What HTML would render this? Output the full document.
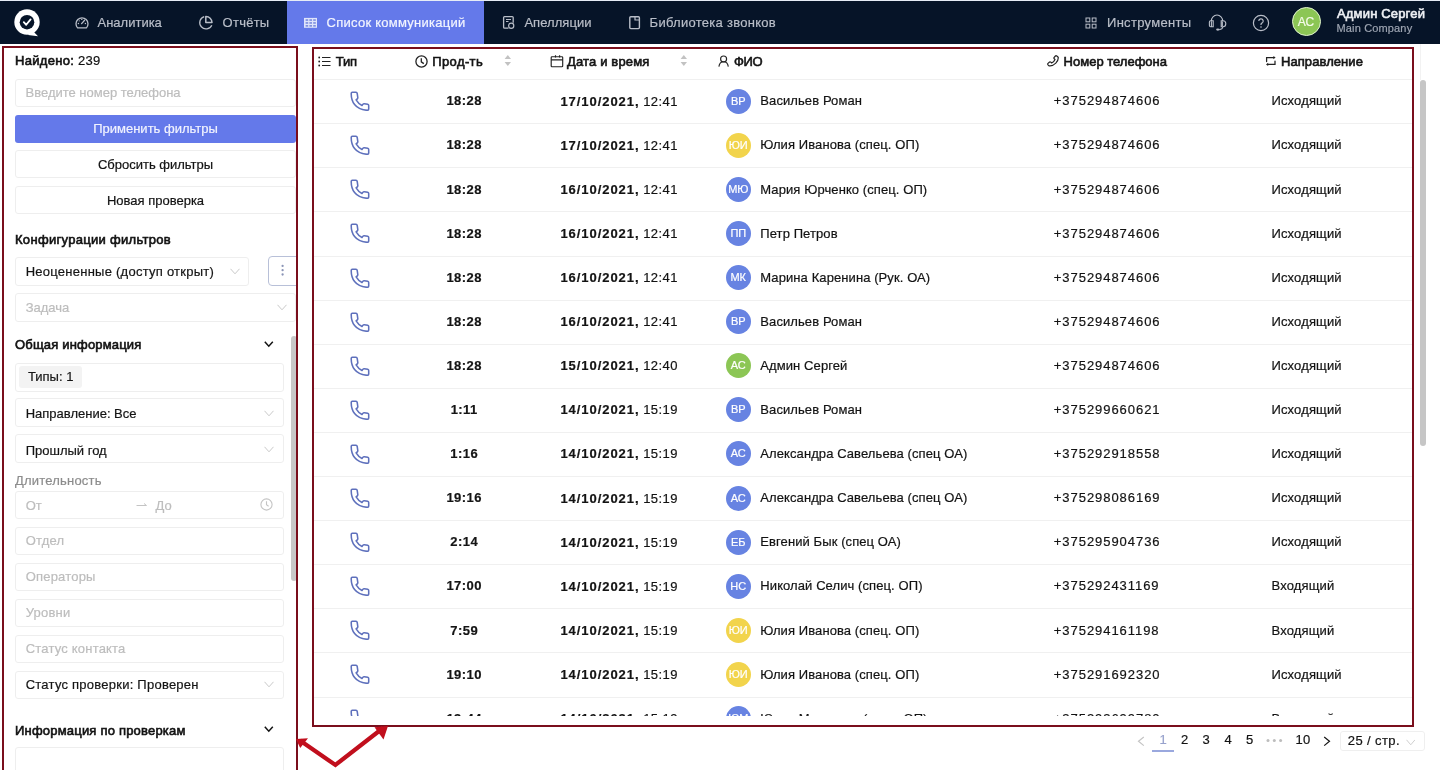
<!DOCTYPE html>
<html><head><meta charset="utf-8"><style>
html,body{margin:0;padding:0;background:#fff;}
body{width:1440px;height:770px;overflow:hidden;position:relative;font-family:"Liberation Sans", sans-serif;}
.t{position:absolute;white-space:nowrap;line-height:1;-webkit-text-stroke:0.2px currentColor;}
#root{position:absolute;left:0;top:0;width:1440px;height:770px;will-change:transform;}
svg{display:block;}
</style></head><body>
<div id="root"><div style="position:absolute;left:0px;top:0px;width:1440px;height:1px;background:#e6ecf6"></div><div style="position:absolute;left:0px;top:1px;width:1440px;height:43px;background:#061428"></div><div style="position:absolute;left:286.6px;top:1px;width:197.8px;height:43px;background:#6479ea"></div><svg style="position:absolute;left:13px;top:8px;" width="28" height="29" viewBox="0 0 28 29"><circle cx="14" cy="14" r="12.7" fill="#fff"/><path d="M19 22 L25 28.2 L15 27 Z" fill="#fff"/><circle cx="14" cy="14.2" r="7.3" fill="#061428"/><path d="M10.8 14.2 L13.2 16.8 L17.6 11.4" fill="none" stroke="#fff" stroke-width="1.8" stroke-linecap="round" stroke-linejoin="round"/></svg><svg style="position:absolute;left:74px;top:15px;" width="16" height="16" viewBox="0 0 16 16"><path d="M3.6 12.9 A6 6 0 1 1 12.4 12.9 Z" fill="none" stroke="#b9bec8" stroke-width="1.3" stroke-linejoin="round"/><path d="M7.6 8.6 L10.6 5.3" stroke="#b9bec8" stroke-width="1.3" stroke-linecap="round"/><circle cx="7.8" cy="4.4" r="0.7" fill="#b9bec8"/><circle cx="4.4" cy="8.5" r="0.7" fill="#b9bec8"/><circle cx="11.4" cy="8.5" r="0.7" fill="#b9bec8"/><circle cx="5.2" cy="5.8" r="0.6" fill="#b9bec8"/></svg><div class="t" style="left:97.5px;top:16.20px;font-size:13px;font-weight:400;color:#b9bec8;letter-spacing:0px;">Аналитика</div><svg style="position:absolute;left:197px;top:14px;" width="17" height="17" viewBox="0 0 17 17"><path d="M7.2 2.6 A6.3 6.3 0 1 0 14.8 11.2" fill="none" stroke="#b9bec8" stroke-width="1.3"/><path d="M8.8 2.6 A6 6 0 0 1 15 8.6 H8.8 Z" fill="none" stroke="#b9bec8" stroke-width="1.5" stroke-linejoin="round"/></svg><div class="t" style="left:222.6px;top:16.20px;font-size:13px;font-weight:400;color:#b9bec8;letter-spacing:0.25px;">Отчёты</div><svg style="position:absolute;left:303px;top:17px;" width="15" height="12" viewBox="0 0 15 12"><rect x="1" y="0.9" width="13" height="9.9" fill="#dfe4fb"/><g fill="#8091e0"><rect x="2.6" y="2.2" width="2.6" height="1.7"/><rect x="6.4" y="2.2" width="2.6" height="1.7"/><rect x="10.2" y="2.2" width="2.6" height="1.7"/><rect x="2.6" y="5.1" width="2.6" height="1.7"/><rect x="6.4" y="5.1" width="2.6" height="1.7"/><rect x="10.2" y="5.1" width="2.6" height="1.7"/><rect x="2.6" y="8" width="2.6" height="1.7"/><rect x="6.4" y="8" width="2.6" height="1.7"/><rect x="10.2" y="8" width="2.6" height="1.7"/></g></svg><div class="t" style="left:326.6px;top:16.20px;font-size:13px;font-weight:400;color:#f3f5ff;letter-spacing:0.25px;">Список коммуникаций</div><svg style="position:absolute;left:502px;top:15px;" width="14" height="15" viewBox="0 0 14 15"><path d="M6.5 13.2 H2.6 Q1.6 13.2 1.6 12.2 V2.6 Q1.6 1.6 2.6 1.6 H10.2 Q11.2 1.6 11.2 2.6 V7.8" fill="none" stroke="#b9bec8" stroke-width="1.3"/><path d="M4 4.5 H9 M4 6.5 H6.5" stroke="#b9bec8" stroke-width="1.1"/><circle cx="9.2" cy="10.7" r="2.6" fill="none" stroke="#b9bec8" stroke-width="1.2"/></svg><div class="t" style="left:524.4px;top:16.20px;font-size:13px;font-weight:400;color:#b9bec8;letter-spacing:0.05px;">Апелляции</div><svg style="position:absolute;left:628px;top:15px;" width="13" height="15" viewBox="0 0 13 15"><rect x="1.8" y="1.8" width="9.6" height="11.8" rx="1" fill="none" stroke="#b9bec8" stroke-width="1.4"/><path d="M7 1.8 V5 H11.4" fill="none" stroke="#b9bec8" stroke-width="1.2"/></svg><div class="t" style="left:649.6px;top:16.20px;font-size:13px;font-weight:400;color:#b9bec8;letter-spacing:0.28px;">Библиотека звонков</div><svg style="position:absolute;left:1085px;top:17px;" width="12" height="12" viewBox="0 0 12 12"><rect x="1" y="1" width="3.8" height="3.8" fill="none" stroke="#b9bec8" stroke-width="1"/><rect x="7.2" y="1" width="3.8" height="3.8" fill="none" stroke="#b9bec8" stroke-width="1"/><rect x="1" y="7.2" width="3.8" height="3.8" fill="none" stroke="#b9bec8" stroke-width="1"/><rect x="7.2" y="7.2" width="3.8" height="3.8" fill="none" stroke="#b9bec8" stroke-width="1"/></svg><div class="t" style="left:1107px;top:16.20px;font-size:13px;font-weight:400;color:#b9bec8;letter-spacing:0.3px;">Инструменты</div><svg style="position:absolute;left:1207px;top:12px;" width="21" height="20" viewBox="0 0 21 20"><path d="M4.3 9.2 A5.7 6.2 0 0 1 15.7 9.2" fill="none" stroke="#b9bec8" stroke-width="1.1"/><path d="M6.2 8.8 H3.6 Q2.4 8.8 2.4 10 V13.6 Q2.4 14.8 3.6 14.8 H6.2 Z M4.4 9.4 V14.2" fill="none" stroke="#b9bec8" stroke-width="1.1"/><path d="M14.2 8.8 H16 Q18.8 8.8 18.8 11.8 Q18.8 14.8 16 14.8 H14.2 Z" fill="none" stroke="#b9bec8" stroke-width="1.1"/><path d="M15.2 9.4 V14.2" stroke="#b9bec8" stroke-width="1.4"/><path d="M15.8 15 Q15.4 17.4 12.2 17.6" fill="none" stroke="#b9bec8" stroke-width="1.1"/><ellipse cx="10.8" cy="17.6" rx="1.7" ry="1.1" fill="#b9bec8"/></svg><svg style="position:absolute;left:1251.5px;top:13.8px;" width="18" height="18" viewBox="0 0 18 18"><circle cx="9" cy="9" r="7.6" fill="none" stroke="#b9bec8" stroke-width="1.2"/><path d="M6.8 7.1 A2.2 2.2 0 1 1 9.9 9.1 Q9 9.6 9 10.6 V11" fill="none" stroke="#b9bec8" stroke-width="1.2"/><circle cx="9" cy="13" r="0.8" fill="#b9bec8"/></svg><div style="position:absolute;left:1291.5px;top:7px;width:29px;height:29px;border-radius:50%;background:#8cc655;box-sizing:border-box;border:1.5px solid #e2f4cf"></div><div class="t" style="left:1106px;width:400px;text-align:center;top:16.14px;font-size:12px;font-weight:400;color:#f4fbe9;letter-spacing:0px;">АС</div><div class="t" style="left:1337px;top:7.30px;font-size:13px;font-weight:400;color:#eef0f4;letter-spacing:0.17px;-webkit-text-stroke:0.6px #eef0f4;">Админ Сергей</div><div class="t" style="left:1336.5px;top:23.49px;font-size:11px;font-weight:400;color:#9ea5b2;letter-spacing:0.15px;">Main Company</div><div style="position:absolute;left:0;top:44px;width:296px;height:726px;overflow:hidden"><div style="position:absolute;left:0;top:-44px;width:1440px;height:770px"><div class="t" style="left:15px;top:54.40px;font-size:13px;font-weight:400;color:#111;letter-spacing:0.3px;"><span style="-webkit-text-stroke:0.6px #111">Найдено:</span> 239</div><div style="position:absolute;left:14.5px;top:78.5px;width:281.5px;height:28px;box-sizing:border-box;border:1px solid #eeeeee;border-radius:3px;background:#fff;"></div><div class="t" style="left:25.5px;top:86.20px;font-size:13px;font-weight:400;color:#bdbdbd;letter-spacing:0px;">Введите номер телефона</div><div style="position:absolute;left:14.5px;top:114.5px;width:281.5px;height:28px;background:#6479ea;border-radius:3px"></div><div class="t" style="left:-44.5px;width:400px;text-align:center;top:122.20px;font-size:13px;font-weight:400;color:#f1f3ff;letter-spacing:0px;">Применить фильтры</div><div style="position:absolute;left:14.5px;top:150.3px;width:281.5px;height:28px;box-sizing:border-box;border:1px solid #eeeeee;border-radius:3px;background:#fff;"></div><div class="t" style="left:-44.5px;width:400px;text-align:center;top:158.30px;font-size:13px;font-weight:400;color:#131313;letter-spacing:0px;">Сбросить фильтры</div><div style="position:absolute;left:14.5px;top:186px;width:281.5px;height:28px;box-sizing:border-box;border:1px solid #eeeeee;border-radius:3px;background:#fff;"></div><div class="t" style="left:-44.5px;width:400px;text-align:center;top:194.20px;font-size:13px;font-weight:400;color:#131313;letter-spacing:0px;">Новая проверка</div><div class="t" style="left:15px;top:232.60px;font-size:13px;font-weight:400;color:#111;letter-spacing:0.3px;-webkit-text-stroke:0.6px #111;">Конфигурации фильтров</div><div style="position:absolute;left:14.5px;top:256.5px;width:234.5px;height:29px;box-sizing:border-box;border:1px solid #eeeeee;border-radius:3px;background:#fff;"></div><div class="t" style="left:25.7px;top:264.70px;font-size:13px;font-weight:400;color:#151515;letter-spacing:0.25px;">Неоцененные (доступ открыт)</div><svg style="position:absolute;left:229.5px;top:268px;" width="10" height="7" viewBox="0 0 10 7"><path d="M0.5 0.8 L5.0 5.8 L9.5 0.8" fill="none" stroke="#c9c9c9" stroke-width="1"/></svg><div style="position:absolute;left:268.3px;top:256.2px;width:40px;height:29.4px;box-sizing:border-box;border:1px solid #b8c0d8;border-radius:4px;background:#fff"></div><svg style="position:absolute;left:280px;top:262px;" width="5" height="14" viewBox="0 0 5 14"><circle cx="2.6" cy="3.9" r="1.15" fill="#8a94b6"/><circle cx="2.6" cy="8.2" r="1.15" fill="#8a94b6"/><circle cx="2.6" cy="12.5" r="1.15" fill="#8a94b6"/></svg><div style="position:absolute;left:14.5px;top:292.6px;width:281.5px;height:29px;box-sizing:border-box;border:1px solid #eeeeee;border-radius:3px;background:#fff;"></div><div class="t" style="left:25.7px;top:301.00px;font-size:13px;font-weight:400;color:#bdbdbd;letter-spacing:0px;">Задача</div><svg style="position:absolute;left:277px;top:304px;" width="10" height="7" viewBox="0 0 10 7"><path d="M0.5 0.8 L5.0 5.8 L9.5 0.8" fill="none" stroke="#c9c9c9" stroke-width="1"/></svg><div class="t" style="left:15px;top:338.30px;font-size:13px;font-weight:400;color:#111;letter-spacing:0.18px;-webkit-text-stroke:0.6px #111;">Общая информация</div><svg style="position:absolute;left:264px;top:341px;" width="10" height="7" viewBox="0 0 10 7"><path d="M0.8 0.8 L4.8 5.2 L8.8 0.8" fill="none" stroke="#131313" stroke-width="1.5"/></svg><div style="position:absolute;left:14.5px;top:362.5px;width:269px;height:29px;box-sizing:border-box;border:1px solid #eeeeee;border-radius:3px;background:#fff;"></div><div style="position:absolute;left:19.3px;top:366.4px;width:62.4px;height:21.5px;background:#f3f3f3;border-radius:3px"></div><div class="t" style="left:27.9px;top:369.70px;font-size:13px;font-weight:400;color:#151515;letter-spacing:0px;">Типы: 1</div><div style="position:absolute;left:14.5px;top:398.3px;width:269px;height:29px;box-sizing:border-box;border:1px solid #eeeeee;border-radius:3px;background:#fff;"></div><div class="t" style="left:25.7px;top:406.50px;font-size:13px;font-weight:400;color:#151515;letter-spacing:0px;">Направление: Все</div><svg style="position:absolute;left:263.5px;top:410px;" width="10" height="7" viewBox="0 0 10 7"><path d="M0.5 0.8 L5.0 5.8 L9.5 0.8" fill="none" stroke="#c9c9c9" stroke-width="1"/></svg><div style="position:absolute;left:14.5px;top:434.3px;width:269px;height:29px;box-sizing:border-box;border:1px solid #eeeeee;border-radius:3px;background:#fff;"></div><div class="t" style="left:25.7px;top:443.50px;font-size:13px;font-weight:400;color:#151515;letter-spacing:0px;">Прошлый год</div><svg style="position:absolute;left:263.5px;top:446px;" width="10" height="7" viewBox="0 0 10 7"><path d="M0.5 0.8 L5.0 5.8 L9.5 0.8" fill="none" stroke="#c9c9c9" stroke-width="1"/></svg><div class="t" style="left:15px;top:473.90px;font-size:13px;font-weight:400;color:#8c8c8c;letter-spacing:0.2px;">Длительность</div><div style="position:absolute;left:14.5px;top:490.5px;width:269px;height:28px;box-sizing:border-box;border:1px solid #eeeeee;border-radius:3px;background:#fff;"></div><div class="t" style="left:25.7px;top:498.50px;font-size:13px;font-weight:400;color:#bdbdbd;letter-spacing:0px;">От</div><svg style="position:absolute;left:136px;top:502px;" width="12" height="6" viewBox="0 0 12 6"><path d="M0.5 3.5 H10.5 L8 1.5" fill="none" stroke="#c4c4c4" stroke-width="1"/></svg><div class="t" style="left:155.5px;top:498.50px;font-size:13px;font-weight:400;color:#bdbdbd;letter-spacing:0px;">До</div><svg style="position:absolute;left:260px;top:498px;" width="13" height="13" viewBox="0 0 13 13"><circle cx="6.5" cy="6.5" r="5.6" fill="none" stroke="#c4c4c4" stroke-width="1.1"/><path d="M6.5 3.3 V6.8 L8.6 8.2" fill="none" stroke="#c4c4c4" stroke-width="1.1"/></svg><div style="position:absolute;left:14.5px;top:526.5px;width:269px;height:28px;box-sizing:border-box;border:1px solid #eeeeee;border-radius:3px;background:#fff;"></div><div class="t" style="left:25.7px;top:534.30px;font-size:13px;font-weight:400;color:#bdbdbd;letter-spacing:0.2px;">Отдел</div><div style="position:absolute;left:14.5px;top:562.5px;width:269px;height:28px;box-sizing:border-box;border:1px solid #eeeeee;border-radius:3px;background:#fff;"></div><div class="t" style="left:25.7px;top:570.30px;font-size:13px;font-weight:400;color:#bdbdbd;letter-spacing:0.2px;">Операторы</div><div style="position:absolute;left:14.5px;top:598.5px;width:269px;height:28px;box-sizing:border-box;border:1px solid #eeeeee;border-radius:3px;background:#fff;"></div><div class="t" style="left:25.7px;top:606.30px;font-size:13px;font-weight:400;color:#bdbdbd;letter-spacing:0.2px;">Уровни</div><div style="position:absolute;left:14.5px;top:634.5px;width:269px;height:28px;box-sizing:border-box;border:1px solid #eeeeee;border-radius:3px;background:#fff;"></div><div class="t" style="left:25.7px;top:642.30px;font-size:13px;font-weight:400;color:#bdbdbd;letter-spacing:0.2px;">Статус контакта</div><div style="position:absolute;left:14.5px;top:670.5px;width:269px;height:28px;box-sizing:border-box;border:1px solid #eeeeee;border-radius:3px;background:#fff;"></div><div class="t" style="left:25.7px;top:678.30px;font-size:13px;font-weight:400;color:#151515;letter-spacing:0.24px;">Статус проверки: Проверен</div><svg style="position:absolute;left:263.5px;top:681px;" width="10" height="7" viewBox="0 0 10 7"><path d="M0.5 0.8 L5.0 5.8 L9.5 0.8" fill="none" stroke="#c9c9c9" stroke-width="1"/></svg><div class="t" style="left:15px;top:724.00px;font-size:13px;font-weight:400;color:#111;letter-spacing:0.2px;-webkit-text-stroke:0.6px #111;">Информация по проверкам</div><svg style="position:absolute;left:264px;top:726px;" width="10" height="7" viewBox="0 0 10 7"><path d="M0.8 0.8 L4.8 5.2 L8.8 0.8" fill="none" stroke="#131313" stroke-width="1.5"/></svg><div style="position:absolute;left:14.5px;top:747px;width:269px;height:28px;box-sizing:border-box;border:1px solid #eeeeee;border-radius:3px;background:#fff;"></div><div style="position:absolute;left:291px;top:335.5px;width:6px;height:245px;background:#c8c8c8;border-radius:3px"></div></div></div><svg style="position:absolute;left:318px;top:56px;" width="13" height="11" viewBox="0 0 13 11"><circle cx="1.2" cy="1.5" r="0.9" fill="#222"/><circle cx="1.2" cy="5.5" r="0.9" fill="#222"/><circle cx="1.2" cy="9.5" r="0.9" fill="#222"/><path d="M4 1.5 H12.5 M4 5.5 H12.5 M4 9.5 H12.5" stroke="#222" stroke-width="1.1"/></svg><div class="t" style="left:335.7px;top:54.80px;font-size:13px;font-weight:400;color:#141414;letter-spacing:-0.1px;-webkit-text-stroke:0.6px #141414;">Тип</div><svg style="position:absolute;left:415.3px;top:54.8px;" width="13" height="13" viewBox="0 0 13 13"><circle cx="6.5" cy="6.5" r="5.6" fill="none" stroke="#222" stroke-width="1.3"/><path d="M6.3 3.2 V6.8 L8.8 8.6" fill="none" stroke="#222" stroke-width="1.3"/></svg><div class="t" style="left:432.2px;top:54.80px;font-size:13px;font-weight:400;color:#141414;letter-spacing:0.4px;-webkit-text-stroke:0.6px #141414;">Прод-ть</div><svg style="position:absolute;left:503.7px;top:55px;" width="8" height="11" viewBox="0 0 8 11"><path d="M0.6 4 L3.8 0 L7 4 Z" fill="#c2c2c2"/><path d="M0.6 7 L3.8 11 L7 7 Z" fill="#c2c2c2"/></svg><svg style="position:absolute;left:550px;top:54px;" width="14" height="14" viewBox="0 0 14 14"><rect x="1.2" y="2.7" width="11.5" height="10" rx="0.8" fill="none" stroke="#222" stroke-width="1.15"/><path d="M1.2 5.8 H12.7 M5.5 1.2 V3.6 M9.6 1.2 V3.6" stroke="#222" stroke-width="1.15"/></svg><div class="t" style="left:567px;top:54.80px;font-size:13px;font-weight:400;color:#141414;letter-spacing:0.15px;-webkit-text-stroke:0.6px #141414;">Дата и время</div><svg style="position:absolute;left:679.7px;top:55px;" width="8" height="11" viewBox="0 0 8 11"><path d="M0.6 4 L3.8 0 L7 4 Z" fill="#c2c2c2"/><path d="M0.6 7 L3.8 11 L7 7 Z" fill="#c2c2c2"/></svg><svg style="position:absolute;left:718px;top:54px;" width="12" height="14" viewBox="0 0 12 14"><circle cx="5.6" cy="5" r="3" fill="none" stroke="#222" stroke-width="1.15"/><path d="M0.9 12.6 Q1.6 7.7 5.6 7.7 Q9.6 7.7 10.3 12.6" fill="none" stroke="#222" stroke-width="1.15"/></svg><div class="t" style="left:734px;top:54.80px;font-size:13px;font-weight:400;color:#141414;letter-spacing:-0.35px;-webkit-text-stroke:0.6px #141414;">ФИО</div><svg style="position:absolute;left:1046px;top:54px;" width="14" height="13" viewBox="0 0 14 13"><g transform="translate(14,0) scale(-1,1)"><path d="M3.2 2 Q4 1.4 4.6 2 L6 3.6 Q6.4 4.2 5.8 4.8 L5 5.4 Q6 7.8 8.4 9 L9.2 8.2 Q9.8 7.6 10.4 8 L12 9.4 Q12.6 10 12 10.8 L11 11.8 Q7.4 12.4 4.2 9.2 Q1.4 6.2 1.8 3.2 Z" fill="none" stroke="#222" stroke-width="1.2" stroke-linejoin="round"/></g></svg><div class="t" style="left:1063.6px;top:54.80px;font-size:13px;font-weight:400;color:#141414;letter-spacing:0px;-webkit-text-stroke:0.6px #141414;">Номер телефона</div><svg style="position:absolute;left:1264px;top:55px;" width="13" height="12" viewBox="0 0 13 12"><path d="M2.6 6.6 V2.6 H10" fill="none" stroke="#222" stroke-width="1.25" stroke-linecap="round"/><path d="M9.4 0.9 L11.6 2.6 L9.4 4.3 Z" fill="#222"/><path d="M11 6 V9.4 H3.6" fill="none" stroke="#222" stroke-width="1.25" stroke-linecap="round"/><path d="M4.2 7.7 L2 9.4 L4.2 11.1 Z" fill="#222"/></svg><div class="t" style="left:1281px;top:54.80px;font-size:13px;font-weight:400;color:#141414;letter-spacing:0.07px;-webkit-text-stroke:0.6px #141414;">Направление</div><div style="position:absolute;left:0;top:0;width:1440px;height:716px;overflow:hidden"><div style="position:absolute;left:314px;top:79.1px;width:1098px;height:1px;background:#f0f0f0"></div><svg style="position:absolute;left:349.5px;top:91.14999999999999px;" width="20" height="20" viewBox="0 0 20 20"><path d="M1.2 2.4 Q1.2 1.3 2.3 1.3 H6 Q7 1.3 7.2 2.3 L7.8 6.6 Q7.9 7.5 7.2 8 L6.1 8.8 Q8.3 12.5 12 14.5 L12.8 13.4 Q13.4 12.6 14.3 12.7 L17.7 13.3 Q18.7 13.5 18.7 14.5 V18.1 Q18.7 19.3 17.4 19.3 Q8.8 19 4.6 13.6 Q1.2 9.2 1.2 2.4 Z" fill="none" stroke="#5e70bc" stroke-width="1.55" stroke-linejoin="round"/></svg><div class="t" style="left:264.2px;width:400px;text-align:center;top:94.35px;font-size:13px;font-weight:700;color:#141414;letter-spacing:0.45px;">18:28</div><div class="t" style="left:560.4px;top:94.65px;font-size:13px;font-weight:400;color:#131313;letter-spacing:0px;"><b style="letter-spacing:0.95px">17/10/2021,</b> <span style="letter-spacing:0.45px">12:41</span></div><div style="position:absolute;left:725.6px;top:88.64999999999999px;width:25px;height:25px;border-radius:50%;background:#6783e2"></div><div class="t" style="left:538.2px;width:400px;text-align:center;top:95.64px;font-size:11px;font-weight:400;color:#fff;letter-spacing:-0.1px;">ВР</div><div class="t" style="left:760.3px;top:94.35px;font-size:13px;font-weight:400;color:#131313;letter-spacing:0.09px;">Васильев Роман</div><div class="t" style="left:1053.8px;top:94.35px;font-size:13px;font-weight:400;color:#131313;letter-spacing:0.95px;">+375294874606</div><div class="t" style="left:1271.5px;top:94.35px;font-size:13px;font-weight:400;color:#131313;letter-spacing:0.14px;">Исходящий</div><div style="position:absolute;left:314px;top:123.19999999999999px;width:1098px;height:1px;background:#f0f0f0"></div><svg style="position:absolute;left:349.5px;top:135.25px;" width="20" height="20" viewBox="0 0 20 20"><path d="M1.2 2.4 Q1.2 1.3 2.3 1.3 H6 Q7 1.3 7.2 2.3 L7.8 6.6 Q7.9 7.5 7.2 8 L6.1 8.8 Q8.3 12.5 12 14.5 L12.8 13.4 Q13.4 12.6 14.3 12.7 L17.7 13.3 Q18.7 13.5 18.7 14.5 V18.1 Q18.7 19.3 17.4 19.3 Q8.8 19 4.6 13.6 Q1.2 9.2 1.2 2.4 Z" fill="none" stroke="#5e70bc" stroke-width="1.55" stroke-linejoin="round"/></svg><div class="t" style="left:264.2px;width:400px;text-align:center;top:138.45px;font-size:13px;font-weight:700;color:#141414;letter-spacing:0.45px;">18:28</div><div class="t" style="left:560.4px;top:138.75px;font-size:13px;font-weight:400;color:#131313;letter-spacing:0px;"><b style="letter-spacing:0.95px">17/10/2021,</b> <span style="letter-spacing:0.45px">12:41</span></div><div style="position:absolute;left:725.6px;top:132.75px;width:25px;height:25px;border-radius:50%;background:#f2d44c"></div><div class="t" style="left:538.2px;width:400px;text-align:center;top:139.74px;font-size:11px;font-weight:400;color:#fff;letter-spacing:-0.1px;">ЮИ</div><div class="t" style="left:760.3px;top:138.45px;font-size:13px;font-weight:400;color:#131313;letter-spacing:0.09px;">Юлия Иванова (спец. ОП)</div><div class="t" style="left:1053.8px;top:138.45px;font-size:13px;font-weight:400;color:#131313;letter-spacing:0.95px;">+375294874606</div><div class="t" style="left:1271.5px;top:138.45px;font-size:13px;font-weight:400;color:#131313;letter-spacing:0.14px;">Исходящий</div><div style="position:absolute;left:314px;top:167.3px;width:1098px;height:1px;background:#f0f0f0"></div><svg style="position:absolute;left:349.5px;top:179.35000000000002px;" width="20" height="20" viewBox="0 0 20 20"><path d="M1.2 2.4 Q1.2 1.3 2.3 1.3 H6 Q7 1.3 7.2 2.3 L7.8 6.6 Q7.9 7.5 7.2 8 L6.1 8.8 Q8.3 12.5 12 14.5 L12.8 13.4 Q13.4 12.6 14.3 12.7 L17.7 13.3 Q18.7 13.5 18.7 14.5 V18.1 Q18.7 19.3 17.4 19.3 Q8.8 19 4.6 13.6 Q1.2 9.2 1.2 2.4 Z" fill="none" stroke="#5e70bc" stroke-width="1.55" stroke-linejoin="round"/></svg><div class="t" style="left:264.2px;width:400px;text-align:center;top:182.55px;font-size:13px;font-weight:700;color:#141414;letter-spacing:0.45px;">18:28</div><div class="t" style="left:560.4px;top:182.85px;font-size:13px;font-weight:400;color:#131313;letter-spacing:0px;"><b style="letter-spacing:0.95px">16/10/2021,</b> <span style="letter-spacing:0.45px">12:41</span></div><div style="position:absolute;left:725.6px;top:176.85000000000002px;width:25px;height:25px;border-radius:50%;background:#6783e2"></div><div class="t" style="left:538.2px;width:400px;text-align:center;top:183.84px;font-size:11px;font-weight:400;color:#fff;letter-spacing:-0.1px;">МЮ</div><div class="t" style="left:760.3px;top:182.55px;font-size:13px;font-weight:400;color:#131313;letter-spacing:0.09px;">Мария Юрченко (спец. ОП)</div><div class="t" style="left:1053.8px;top:182.55px;font-size:13px;font-weight:400;color:#131313;letter-spacing:0.95px;">+375294874606</div><div class="t" style="left:1271.5px;top:182.55px;font-size:13px;font-weight:400;color:#131313;letter-spacing:0.14px;">Исходящий</div><div style="position:absolute;left:314px;top:211.4px;width:1098px;height:1px;background:#f0f0f0"></div><svg style="position:absolute;left:349.5px;top:223.45000000000002px;" width="20" height="20" viewBox="0 0 20 20"><path d="M1.2 2.4 Q1.2 1.3 2.3 1.3 H6 Q7 1.3 7.2 2.3 L7.8 6.6 Q7.9 7.5 7.2 8 L6.1 8.8 Q8.3 12.5 12 14.5 L12.8 13.4 Q13.4 12.6 14.3 12.7 L17.7 13.3 Q18.7 13.5 18.7 14.5 V18.1 Q18.7 19.3 17.4 19.3 Q8.8 19 4.6 13.6 Q1.2 9.2 1.2 2.4 Z" fill="none" stroke="#5e70bc" stroke-width="1.55" stroke-linejoin="round"/></svg><div class="t" style="left:264.2px;width:400px;text-align:center;top:226.65px;font-size:13px;font-weight:700;color:#141414;letter-spacing:0.45px;">18:28</div><div class="t" style="left:560.4px;top:226.95px;font-size:13px;font-weight:400;color:#131313;letter-spacing:0px;"><b style="letter-spacing:0.95px">16/10/2021,</b> <span style="letter-spacing:0.45px">12:41</span></div><div style="position:absolute;left:725.6px;top:220.95000000000002px;width:25px;height:25px;border-radius:50%;background:#6783e2"></div><div class="t" style="left:538.2px;width:400px;text-align:center;top:227.94px;font-size:11px;font-weight:400;color:#fff;letter-spacing:-0.1px;">ПП</div><div class="t" style="left:760.3px;top:226.65px;font-size:13px;font-weight:400;color:#131313;letter-spacing:0.09px;">Петр Петров</div><div class="t" style="left:1053.8px;top:226.65px;font-size:13px;font-weight:400;color:#131313;letter-spacing:0.95px;">+375294874606</div><div class="t" style="left:1271.5px;top:226.65px;font-size:13px;font-weight:400;color:#131313;letter-spacing:0.14px;">Исходящий</div><div style="position:absolute;left:314px;top:255.5px;width:1098px;height:1px;background:#f0f0f0"></div><svg style="position:absolute;left:349.5px;top:267.55px;" width="20" height="20" viewBox="0 0 20 20"><path d="M1.2 2.4 Q1.2 1.3 2.3 1.3 H6 Q7 1.3 7.2 2.3 L7.8 6.6 Q7.9 7.5 7.2 8 L6.1 8.8 Q8.3 12.5 12 14.5 L12.8 13.4 Q13.4 12.6 14.3 12.7 L17.7 13.3 Q18.7 13.5 18.7 14.5 V18.1 Q18.7 19.3 17.4 19.3 Q8.8 19 4.6 13.6 Q1.2 9.2 1.2 2.4 Z" fill="none" stroke="#5e70bc" stroke-width="1.55" stroke-linejoin="round"/></svg><div class="t" style="left:264.2px;width:400px;text-align:center;top:270.75px;font-size:13px;font-weight:700;color:#141414;letter-spacing:0.45px;">18:28</div><div class="t" style="left:560.4px;top:271.05px;font-size:13px;font-weight:400;color:#131313;letter-spacing:0px;"><b style="letter-spacing:0.95px">16/10/2021,</b> <span style="letter-spacing:0.45px">12:41</span></div><div style="position:absolute;left:725.6px;top:265.05px;width:25px;height:25px;border-radius:50%;background:#6783e2"></div><div class="t" style="left:538.2px;width:400px;text-align:center;top:272.04px;font-size:11px;font-weight:400;color:#fff;letter-spacing:-0.1px;">МК</div><div class="t" style="left:760.3px;top:270.75px;font-size:13px;font-weight:400;color:#131313;letter-spacing:0.09px;">Марина Каренина (Рук. ОА)</div><div class="t" style="left:1053.8px;top:270.75px;font-size:13px;font-weight:400;color:#131313;letter-spacing:0.95px;">+375294874606</div><div class="t" style="left:1271.5px;top:270.75px;font-size:13px;font-weight:400;color:#131313;letter-spacing:0.14px;">Исходящий</div><div style="position:absolute;left:314px;top:299.6px;width:1098px;height:1px;background:#f0f0f0"></div><svg style="position:absolute;left:349.5px;top:311.65000000000003px;" width="20" height="20" viewBox="0 0 20 20"><path d="M1.2 2.4 Q1.2 1.3 2.3 1.3 H6 Q7 1.3 7.2 2.3 L7.8 6.6 Q7.9 7.5 7.2 8 L6.1 8.8 Q8.3 12.5 12 14.5 L12.8 13.4 Q13.4 12.6 14.3 12.7 L17.7 13.3 Q18.7 13.5 18.7 14.5 V18.1 Q18.7 19.3 17.4 19.3 Q8.8 19 4.6 13.6 Q1.2 9.2 1.2 2.4 Z" fill="none" stroke="#5e70bc" stroke-width="1.55" stroke-linejoin="round"/></svg><div class="t" style="left:264.2px;width:400px;text-align:center;top:314.85px;font-size:13px;font-weight:700;color:#141414;letter-spacing:0.45px;">18:28</div><div class="t" style="left:560.4px;top:315.15px;font-size:13px;font-weight:400;color:#131313;letter-spacing:0px;"><b style="letter-spacing:0.95px">16/10/2021,</b> <span style="letter-spacing:0.45px">12:41</span></div><div style="position:absolute;left:725.6px;top:309.15000000000003px;width:25px;height:25px;border-radius:50%;background:#6783e2"></div><div class="t" style="left:538.2px;width:400px;text-align:center;top:316.14px;font-size:11px;font-weight:400;color:#fff;letter-spacing:-0.1px;">ВР</div><div class="t" style="left:760.3px;top:314.85px;font-size:13px;font-weight:400;color:#131313;letter-spacing:0.09px;">Васильев Роман</div><div class="t" style="left:1053.8px;top:314.85px;font-size:13px;font-weight:400;color:#131313;letter-spacing:0.95px;">+375294874606</div><div class="t" style="left:1271.5px;top:314.85px;font-size:13px;font-weight:400;color:#131313;letter-spacing:0.14px;">Исходящий</div><div style="position:absolute;left:314px;top:343.70000000000005px;width:1098px;height:1px;background:#f0f0f0"></div><svg style="position:absolute;left:349.5px;top:355.75000000000006px;" width="20" height="20" viewBox="0 0 20 20"><path d="M1.2 2.4 Q1.2 1.3 2.3 1.3 H6 Q7 1.3 7.2 2.3 L7.8 6.6 Q7.9 7.5 7.2 8 L6.1 8.8 Q8.3 12.5 12 14.5 L12.8 13.4 Q13.4 12.6 14.3 12.7 L17.7 13.3 Q18.7 13.5 18.7 14.5 V18.1 Q18.7 19.3 17.4 19.3 Q8.8 19 4.6 13.6 Q1.2 9.2 1.2 2.4 Z" fill="none" stroke="#5e70bc" stroke-width="1.55" stroke-linejoin="round"/></svg><div class="t" style="left:264.2px;width:400px;text-align:center;top:358.95px;font-size:13px;font-weight:700;color:#141414;letter-spacing:0.45px;">18:28</div><div class="t" style="left:560.4px;top:359.25px;font-size:13px;font-weight:400;color:#131313;letter-spacing:0px;"><b style="letter-spacing:0.95px">15/10/2021,</b> <span style="letter-spacing:0.45px">12:40</span></div><div style="position:absolute;left:725.6px;top:353.25000000000006px;width:25px;height:25px;border-radius:50%;background:#8cc655"></div><div class="t" style="left:538.2px;width:400px;text-align:center;top:360.24px;font-size:11px;font-weight:400;color:#fff;letter-spacing:-0.1px;">АС</div><div class="t" style="left:760.3px;top:358.95px;font-size:13px;font-weight:400;color:#131313;letter-spacing:0.09px;">Админ Сергей</div><div class="t" style="left:1053.8px;top:358.95px;font-size:13px;font-weight:400;color:#131313;letter-spacing:0.95px;">+375294874606</div><div class="t" style="left:1271.5px;top:358.95px;font-size:13px;font-weight:400;color:#131313;letter-spacing:0.14px;">Исходящий</div><div style="position:absolute;left:314px;top:387.79999999999995px;width:1098px;height:1px;background:#f0f0f0"></div><svg style="position:absolute;left:349.5px;top:399.84999999999997px;" width="20" height="20" viewBox="0 0 20 20"><path d="M1.2 2.4 Q1.2 1.3 2.3 1.3 H6 Q7 1.3 7.2 2.3 L7.8 6.6 Q7.9 7.5 7.2 8 L6.1 8.8 Q8.3 12.5 12 14.5 L12.8 13.4 Q13.4 12.6 14.3 12.7 L17.7 13.3 Q18.7 13.5 18.7 14.5 V18.1 Q18.7 19.3 17.4 19.3 Q8.8 19 4.6 13.6 Q1.2 9.2 1.2 2.4 Z" fill="none" stroke="#5e70bc" stroke-width="1.55" stroke-linejoin="round"/></svg><div class="t" style="left:264.2px;width:400px;text-align:center;top:403.05px;font-size:13px;font-weight:700;color:#141414;letter-spacing:0.45px;">1:11</div><div class="t" style="left:560.4px;top:403.35px;font-size:13px;font-weight:400;color:#131313;letter-spacing:0px;"><b style="letter-spacing:0.95px">14/10/2021,</b> <span style="letter-spacing:0.45px">15:19</span></div><div style="position:absolute;left:725.6px;top:397.34999999999997px;width:25px;height:25px;border-radius:50%;background:#6783e2"></div><div class="t" style="left:538.2px;width:400px;text-align:center;top:404.34px;font-size:11px;font-weight:400;color:#fff;letter-spacing:-0.1px;">ВР</div><div class="t" style="left:760.3px;top:403.05px;font-size:13px;font-weight:400;color:#131313;letter-spacing:0.09px;">Васильев Роман</div><div class="t" style="left:1053.8px;top:403.05px;font-size:13px;font-weight:400;color:#131313;letter-spacing:0.95px;">+375299660621</div><div class="t" style="left:1271.5px;top:403.05px;font-size:13px;font-weight:400;color:#131313;letter-spacing:0.14px;">Исходящий</div><div style="position:absolute;left:314px;top:431.9px;width:1098px;height:1px;background:#f0f0f0"></div><svg style="position:absolute;left:349.5px;top:443.95px;" width="20" height="20" viewBox="0 0 20 20"><path d="M1.2 2.4 Q1.2 1.3 2.3 1.3 H6 Q7 1.3 7.2 2.3 L7.8 6.6 Q7.9 7.5 7.2 8 L6.1 8.8 Q8.3 12.5 12 14.5 L12.8 13.4 Q13.4 12.6 14.3 12.7 L17.7 13.3 Q18.7 13.5 18.7 14.5 V18.1 Q18.7 19.3 17.4 19.3 Q8.8 19 4.6 13.6 Q1.2 9.2 1.2 2.4 Z" fill="none" stroke="#5e70bc" stroke-width="1.55" stroke-linejoin="round"/></svg><div class="t" style="left:264.2px;width:400px;text-align:center;top:447.15px;font-size:13px;font-weight:700;color:#141414;letter-spacing:0.45px;">1:16</div><div class="t" style="left:560.4px;top:447.45px;font-size:13px;font-weight:400;color:#131313;letter-spacing:0px;"><b style="letter-spacing:0.95px">14/10/2021,</b> <span style="letter-spacing:0.45px">15:19</span></div><div style="position:absolute;left:725.6px;top:441.45px;width:25px;height:25px;border-radius:50%;background:#6783e2"></div><div class="t" style="left:538.2px;width:400px;text-align:center;top:448.44px;font-size:11px;font-weight:400;color:#fff;letter-spacing:-0.1px;">АС</div><div class="t" style="left:760.3px;top:447.15px;font-size:13px;font-weight:400;color:#131313;letter-spacing:0.09px;">Александра Савельева (спец ОА)</div><div class="t" style="left:1053.8px;top:447.15px;font-size:13px;font-weight:400;color:#131313;letter-spacing:0.95px;">+375292918558</div><div class="t" style="left:1271.5px;top:447.15px;font-size:13px;font-weight:400;color:#131313;letter-spacing:0.14px;">Исходящий</div><div style="position:absolute;left:314px;top:476.0px;width:1098px;height:1px;background:#f0f0f0"></div><svg style="position:absolute;left:349.5px;top:488.05px;" width="20" height="20" viewBox="0 0 20 20"><path d="M1.2 2.4 Q1.2 1.3 2.3 1.3 H6 Q7 1.3 7.2 2.3 L7.8 6.6 Q7.9 7.5 7.2 8 L6.1 8.8 Q8.3 12.5 12 14.5 L12.8 13.4 Q13.4 12.6 14.3 12.7 L17.7 13.3 Q18.7 13.5 18.7 14.5 V18.1 Q18.7 19.3 17.4 19.3 Q8.8 19 4.6 13.6 Q1.2 9.2 1.2 2.4 Z" fill="none" stroke="#5e70bc" stroke-width="1.55" stroke-linejoin="round"/></svg><div class="t" style="left:264.2px;width:400px;text-align:center;top:491.25px;font-size:13px;font-weight:700;color:#141414;letter-spacing:0.45px;">19:16</div><div class="t" style="left:560.4px;top:491.55px;font-size:13px;font-weight:400;color:#131313;letter-spacing:0px;"><b style="letter-spacing:0.95px">14/10/2021,</b> <span style="letter-spacing:0.45px">15:19</span></div><div style="position:absolute;left:725.6px;top:485.55px;width:25px;height:25px;border-radius:50%;background:#6783e2"></div><div class="t" style="left:538.2px;width:400px;text-align:center;top:492.54px;font-size:11px;font-weight:400;color:#fff;letter-spacing:-0.1px;">АС</div><div class="t" style="left:760.3px;top:491.25px;font-size:13px;font-weight:400;color:#131313;letter-spacing:0.09px;">Александра Савельева (спец ОА)</div><div class="t" style="left:1053.8px;top:491.25px;font-size:13px;font-weight:400;color:#131313;letter-spacing:0.95px;">+375298086169</div><div class="t" style="left:1271.5px;top:491.25px;font-size:13px;font-weight:400;color:#131313;letter-spacing:0.14px;">Исходящий</div><div style="position:absolute;left:314px;top:520.1px;width:1098px;height:1px;background:#f0f0f0"></div><svg style="position:absolute;left:349.5px;top:532.15px;" width="20" height="20" viewBox="0 0 20 20"><path d="M1.2 2.4 Q1.2 1.3 2.3 1.3 H6 Q7 1.3 7.2 2.3 L7.8 6.6 Q7.9 7.5 7.2 8 L6.1 8.8 Q8.3 12.5 12 14.5 L12.8 13.4 Q13.4 12.6 14.3 12.7 L17.7 13.3 Q18.7 13.5 18.7 14.5 V18.1 Q18.7 19.3 17.4 19.3 Q8.8 19 4.6 13.6 Q1.2 9.2 1.2 2.4 Z" fill="none" stroke="#5e70bc" stroke-width="1.55" stroke-linejoin="round"/></svg><div class="t" style="left:264.2px;width:400px;text-align:center;top:535.35px;font-size:13px;font-weight:700;color:#141414;letter-spacing:0.45px;">2:14</div><div class="t" style="left:560.4px;top:535.65px;font-size:13px;font-weight:400;color:#131313;letter-spacing:0px;"><b style="letter-spacing:0.95px">14/10/2021,</b> <span style="letter-spacing:0.45px">15:19</span></div><div style="position:absolute;left:725.6px;top:529.65px;width:25px;height:25px;border-radius:50%;background:#6783e2"></div><div class="t" style="left:538.2px;width:400px;text-align:center;top:536.64px;font-size:11px;font-weight:400;color:#fff;letter-spacing:-0.1px;">ЕБ</div><div class="t" style="left:760.3px;top:535.35px;font-size:13px;font-weight:400;color:#131313;letter-spacing:0.09px;">Евгений Бык (спец ОА)</div><div class="t" style="left:1053.8px;top:535.35px;font-size:13px;font-weight:400;color:#131313;letter-spacing:0.95px;">+375295904736</div><div class="t" style="left:1271.5px;top:535.35px;font-size:13px;font-weight:400;color:#131313;letter-spacing:0.14px;">Исходящий</div><div style="position:absolute;left:314px;top:564.2px;width:1098px;height:1px;background:#f0f0f0"></div><svg style="position:absolute;left:349.5px;top:576.25px;" width="20" height="20" viewBox="0 0 20 20"><path d="M1.2 2.4 Q1.2 1.3 2.3 1.3 H6 Q7 1.3 7.2 2.3 L7.8 6.6 Q7.9 7.5 7.2 8 L6.1 8.8 Q8.3 12.5 12 14.5 L12.8 13.4 Q13.4 12.6 14.3 12.7 L17.7 13.3 Q18.7 13.5 18.7 14.5 V18.1 Q18.7 19.3 17.4 19.3 Q8.8 19 4.6 13.6 Q1.2 9.2 1.2 2.4 Z" fill="none" stroke="#5e70bc" stroke-width="1.55" stroke-linejoin="round"/></svg><div class="t" style="left:264.2px;width:400px;text-align:center;top:579.45px;font-size:13px;font-weight:700;color:#141414;letter-spacing:0.45px;">17:00</div><div class="t" style="left:560.4px;top:579.75px;font-size:13px;font-weight:400;color:#131313;letter-spacing:0px;"><b style="letter-spacing:0.95px">14/10/2021,</b> <span style="letter-spacing:0.45px">15:19</span></div><div style="position:absolute;left:725.6px;top:573.75px;width:25px;height:25px;border-radius:50%;background:#6783e2"></div><div class="t" style="left:538.2px;width:400px;text-align:center;top:580.74px;font-size:11px;font-weight:400;color:#fff;letter-spacing:-0.1px;">НС</div><div class="t" style="left:760.3px;top:579.45px;font-size:13px;font-weight:400;color:#131313;letter-spacing:0.09px;">Николай Селич (спец. ОП)</div><div class="t" style="left:1053.8px;top:579.45px;font-size:13px;font-weight:400;color:#131313;letter-spacing:0.95px;">+375292431169</div><div class="t" style="left:1271.5px;top:579.45px;font-size:13px;font-weight:400;color:#131313;letter-spacing:0.14px;">Входящий</div><div style="position:absolute;left:314px;top:608.3000000000001px;width:1098px;height:1px;background:#f0f0f0"></div><svg style="position:absolute;left:349.5px;top:620.35px;" width="20" height="20" viewBox="0 0 20 20"><path d="M1.2 2.4 Q1.2 1.3 2.3 1.3 H6 Q7 1.3 7.2 2.3 L7.8 6.6 Q7.9 7.5 7.2 8 L6.1 8.8 Q8.3 12.5 12 14.5 L12.8 13.4 Q13.4 12.6 14.3 12.7 L17.7 13.3 Q18.7 13.5 18.7 14.5 V18.1 Q18.7 19.3 17.4 19.3 Q8.8 19 4.6 13.6 Q1.2 9.2 1.2 2.4 Z" fill="none" stroke="#5e70bc" stroke-width="1.55" stroke-linejoin="round"/></svg><div class="t" style="left:264.2px;width:400px;text-align:center;top:623.55px;font-size:13px;font-weight:700;color:#141414;letter-spacing:0.45px;">7:59</div><div class="t" style="left:560.4px;top:623.85px;font-size:13px;font-weight:400;color:#131313;letter-spacing:0px;"><b style="letter-spacing:0.95px">14/10/2021,</b> <span style="letter-spacing:0.45px">15:19</span></div><div style="position:absolute;left:725.6px;top:617.85px;width:25px;height:25px;border-radius:50%;background:#f2d44c"></div><div class="t" style="left:538.2px;width:400px;text-align:center;top:624.84px;font-size:11px;font-weight:400;color:#fff;letter-spacing:-0.1px;">ЮИ</div><div class="t" style="left:760.3px;top:623.55px;font-size:13px;font-weight:400;color:#131313;letter-spacing:0.09px;">Юлия Иванова (спец. ОП)</div><div class="t" style="left:1053.8px;top:623.55px;font-size:13px;font-weight:400;color:#131313;letter-spacing:0.95px;">+375294161198</div><div class="t" style="left:1271.5px;top:623.55px;font-size:13px;font-weight:400;color:#131313;letter-spacing:0.14px;">Входящий</div><div style="position:absolute;left:314px;top:652.4000000000001px;width:1098px;height:1px;background:#f0f0f0"></div><svg style="position:absolute;left:349.5px;top:664.45px;" width="20" height="20" viewBox="0 0 20 20"><path d="M1.2 2.4 Q1.2 1.3 2.3 1.3 H6 Q7 1.3 7.2 2.3 L7.8 6.6 Q7.9 7.5 7.2 8 L6.1 8.8 Q8.3 12.5 12 14.5 L12.8 13.4 Q13.4 12.6 14.3 12.7 L17.7 13.3 Q18.7 13.5 18.7 14.5 V18.1 Q18.7 19.3 17.4 19.3 Q8.8 19 4.6 13.6 Q1.2 9.2 1.2 2.4 Z" fill="none" stroke="#5e70bc" stroke-width="1.55" stroke-linejoin="round"/></svg><div class="t" style="left:264.2px;width:400px;text-align:center;top:667.65px;font-size:13px;font-weight:700;color:#141414;letter-spacing:0.45px;">19:10</div><div class="t" style="left:560.4px;top:667.95px;font-size:13px;font-weight:400;color:#131313;letter-spacing:0px;"><b style="letter-spacing:0.95px">14/10/2021,</b> <span style="letter-spacing:0.45px">15:19</span></div><div style="position:absolute;left:725.6px;top:661.95px;width:25px;height:25px;border-radius:50%;background:#f2d44c"></div><div class="t" style="left:538.2px;width:400px;text-align:center;top:668.94px;font-size:11px;font-weight:400;color:#fff;letter-spacing:-0.1px;">ЮИ</div><div class="t" style="left:760.3px;top:667.65px;font-size:13px;font-weight:400;color:#131313;letter-spacing:0.09px;">Юлия Иванова (спец. ОП)</div><div class="t" style="left:1053.8px;top:667.65px;font-size:13px;font-weight:400;color:#131313;letter-spacing:0.95px;">+375291692320</div><div class="t" style="left:1271.5px;top:667.65px;font-size:13px;font-weight:400;color:#131313;letter-spacing:0.14px;">Исходящий</div><div style="position:absolute;left:314px;top:696.5px;width:1098px;height:1px;background:#f0f0f0"></div><svg style="position:absolute;left:349.5px;top:708.55px;" width="20" height="20" viewBox="0 0 20 20"><path d="M1.2 2.4 Q1.2 1.3 2.3 1.3 H6 Q7 1.3 7.2 2.3 L7.8 6.6 Q7.9 7.5 7.2 8 L6.1 8.8 Q8.3 12.5 12 14.5 L12.8 13.4 Q13.4 12.6 14.3 12.7 L17.7 13.3 Q18.7 13.5 18.7 14.5 V18.1 Q18.7 19.3 17.4 19.3 Q8.8 19 4.6 13.6 Q1.2 9.2 1.2 2.4 Z" fill="none" stroke="#5e70bc" stroke-width="1.55" stroke-linejoin="round"/></svg><div class="t" style="left:264.2px;width:400px;text-align:center;top:711.75px;font-size:13px;font-weight:700;color:#141414;letter-spacing:0.45px;">19:44</div><div class="t" style="left:560.4px;top:712.05px;font-size:13px;font-weight:400;color:#131313;letter-spacing:0px;"><b style="letter-spacing:0.95px">14/10/2021,</b> <span style="letter-spacing:0.45px">15:19</span></div><div style="position:absolute;left:725.6px;top:706.05px;width:25px;height:25px;border-radius:50%;background:#6783e2"></div><div class="t" style="left:538.2px;width:400px;text-align:center;top:713.04px;font-size:11px;font-weight:400;color:#fff;letter-spacing:-0.1px;">ЮМ</div><div class="t" style="left:760.3px;top:711.75px;font-size:13px;font-weight:400;color:#131313;letter-spacing:0.09px;">Юлия Макарова (спец. ОП)</div><div class="t" style="left:1053.8px;top:711.75px;font-size:13px;font-weight:400;color:#131313;letter-spacing:0.95px;">+375293699780</div><div class="t" style="left:1271.5px;top:711.75px;font-size:13px;font-weight:400;color:#131313;letter-spacing:0.14px;">Входящий</div></div><div style="position:absolute;left:1419.5px;top:44px;width:1px;height:36px;background:#f2f2f2"></div><div style="position:absolute;left:1419.5px;top:80px;width:6px;height:366px;background:#c6c6c6;border-radius:3px"></div><svg style="position:absolute;left:1137px;top:736px;" width="8" height="11" viewBox="0 0 8 11"><path d="M6.8 1 L1.5 5.3 L6.8 9.6" fill="none" stroke="#c4c4c4" stroke-width="1.2"/></svg><div class="t" style="left:963px;width:400px;text-align:center;top:732.60px;font-size:13px;font-weight:400;color:#98a2cc;letter-spacing:0px;">1</div><div style="position:absolute;left:1152.2px;top:750.2px;width:21.7px;height:1.6px;background:#9aa8de"></div><div class="t" style="left:984.5px;width:400px;text-align:center;top:732.60px;font-size:13px;font-weight:400;color:#131313;letter-spacing:0px;">2</div><div class="t" style="left:1006.2px;width:400px;text-align:center;top:732.60px;font-size:13px;font-weight:400;color:#131313;letter-spacing:0px;">3</div><div class="t" style="left:1028px;width:400px;text-align:center;top:732.60px;font-size:13px;font-weight:400;color:#131313;letter-spacing:0px;">4</div><div class="t" style="left:1049.5px;width:400px;text-align:center;top:732.60px;font-size:13px;font-weight:400;color:#131313;letter-spacing:0px;">5</div><svg style="position:absolute;left:1266px;top:738px;" width="17" height="5" viewBox="0 0 17 5"><circle cx="2" cy="2.5" r="1.5" fill="#bdbdbd"/><circle cx="8.3" cy="2.5" r="1.5" fill="#bdbdbd"/><circle cx="14.6" cy="2.5" r="1.5" fill="#bdbdbd"/></svg><div class="t" style="left:1103px;width:400px;text-align:center;top:732.70px;font-size:13px;font-weight:400;color:#131313;letter-spacing:0.3px;">10</div><svg style="position:absolute;left:1323px;top:736px;" width="8" height="11" viewBox="0 0 8 11"><path d="M1.2 1 L6.5 5.3 L1.2 9.6" fill="none" stroke="#151515" stroke-width="1.2"/></svg><div style="position:absolute;left:1339.5px;top:730.6px;width:85.5px;height:20.5px;box-sizing:border-box;border:1px solid #efefef;border-radius:3px"></div><div class="t" style="left:1347.8px;top:733.70px;font-size:13px;font-weight:400;color:#131313;letter-spacing:0.4px;">25 / стр.</div><svg style="position:absolute;left:1405.5px;top:738.5px;" width="9.5" height="7" viewBox="0 0 9.5 7"><path d="M0.5 0.8 L4.75 5.8 L9.0 0.8" fill="none" stroke="#cfcfcf" stroke-width="1"/></svg><div style="position:absolute;left:2px;top:46px;width:295.5px;height:760px;box-sizing:border-box;border:2px solid #7a0e1c;border-bottom:none"></div><div style="position:absolute;left:312.2px;top:46.6px;width:1101.6px;height:680.4px;box-sizing:border-box;border:2px solid #7a0e1c"></div><svg style="position:absolute;left:280px;top:715px;" width="120" height="55" viewBox="0 0 120 55"><path d="M20 25.5 L55.4 50 L103 13" fill="none" stroke="#c10f1d" stroke-width="4.2" stroke-linejoin="miter"/><path d="M16 24 L28 23.3 L20.2 33 Z" fill="#c10f1d"/><path d="M108 11 L94.5 12.2 L103.5 24.5 Z" fill="#c10f1d"/></svg></div>
</body></html>
